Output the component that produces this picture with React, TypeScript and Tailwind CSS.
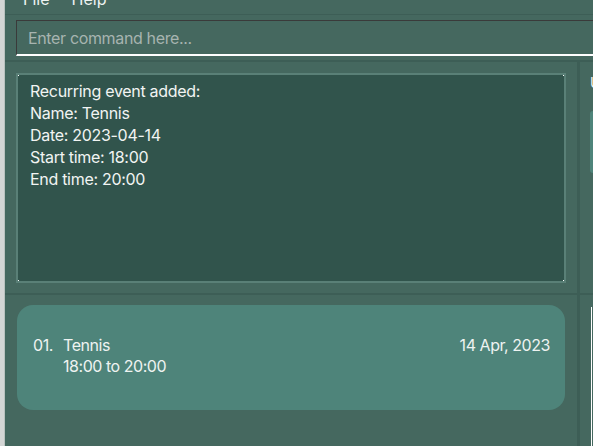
import React from 'react';

const font = { fontFamily: 'Inter, "Noto Sans", sans-serif' };

const resultLines = [
  'Recurring event added:',
  'Name: Tennis',
  'Date: 2023-04-14',
  'Start time: 18:00',
  'End time: 20:00',
];

const EventCard: React.FC = () => (
  <div className="mx-[12px] mt-[10px] h-[105px] rounded-[16px] bg-[#4e847a] pl-[16px] pr-[15px] pt-[30px] text-[16px] leading-[21px] tracking-[-0.45px] text-[#eef3f1]">
    <div className="flex">
      <span className="w-[30px]">01.</span>
      <div className="flex-1">
        <div className="flex justify-between">
          <span>Tennis</span>
          <span>14 Apr, 2023</span>
        </div>
        <div className="flex gap-[4px]">
          <span>18:00</span>
          <span>to</span>
          <span>20:00</span>
        </div>
      </div>
    </div>
  </div>
);

export default function App() {
  return (
    <div className="flex h-[446px] w-[593px] overflow-hidden bg-[#45685f]" style={font}>
      {/* window edge */}
      <div className="w-[5px] shrink-0 border-r border-[#b9c2bf] bg-[#d4d6d5]" />

      <div className="flex min-w-0 flex-1 flex-col">
        {/* menu bar, clipped at the top */}
        <div className="h-[15px] shrink-0 overflow-hidden border-b border-[#3d5e56]">
          <div className="-mt-[12px] flex gap-[22px] pl-[18px] text-[16px] leading-[22px] text-[#eef3f1]">
            <span>File</span>
            <span>Help</span>
          </div>
        </div>

        {/* command box */}
        <div className="shrink-0 pb-[4px] pl-[11px] pt-[5px]">
          <div className="flex h-[36px] w-[620px] items-center border-l border-t border-b-2 border-l-[#3a3a3a] border-t-[#3a3a3a] border-b-white pl-[11px] text-[16px] tracking-[-0.35px] text-[#a7b4b0]">
            Enter command here...
          </div>
        </div>
        <div className="h-[2px] shrink-0 bg-[#3d5e56]" />

        <div className="flex min-h-0 flex-1">
          {/* left column */}
          <div className="flex w-[572px] shrink-0 flex-col">
            <div className="h-[231px] shrink-0 px-[11px] pt-[11px]">
              <div className="relative h-[210px] border-2 border-[#5a8077] bg-[#31544c] px-[12px] pt-[5px] text-[16px] leading-[22px] tracking-[-0.3px] text-[#f2f4f3]">
                <span className="absolute left-0 top-0 h-[1px] w-[1px] bg-white" />
                <span className="absolute right-0 top-0 h-[1px] w-[1px] bg-white" />
                <span className="absolute bottom-0 left-0 h-[1px] w-[1px] bg-white" />
                <span className="absolute bottom-0 right-0 h-[1px] w-[1px] bg-white" />
                {resultLines.map((l) => (
                  <div key={l}>{l}</div>
                ))}
              </div>
            </div>
            <div className="h-[2px] shrink-0 bg-[#3d5e56]" />
            <div className="flex-1">
              <EventCard />
            </div>
          </div>

          {/* divider */}
          <div className="w-[3px] shrink-0 bg-[#3d5e56]" />

          {/* right column */}
          <div className="flex min-w-0 flex-1 flex-col">
            <div className="h-[231px] shrink-0 pl-[10px] pt-[13px]">
              <div className="text-[14px] leading-[16px] text-[#f2f4f3]">Upcoming</div>
              <div className="mt-[20px] h-[62px] rounded-tl-[10px] rounded-bl-[10px] bg-[#4e847a]" />
            </div>
            <div className="h-[2px] shrink-0 bg-[#3d5e56]" />
            <div className="flex-1 pl-[11px] pt-[12px]">
              <div className="h-full w-[1px] bg-white" />
            </div>
          </div>
        </div>
      </div>
    </div>
  );
}
